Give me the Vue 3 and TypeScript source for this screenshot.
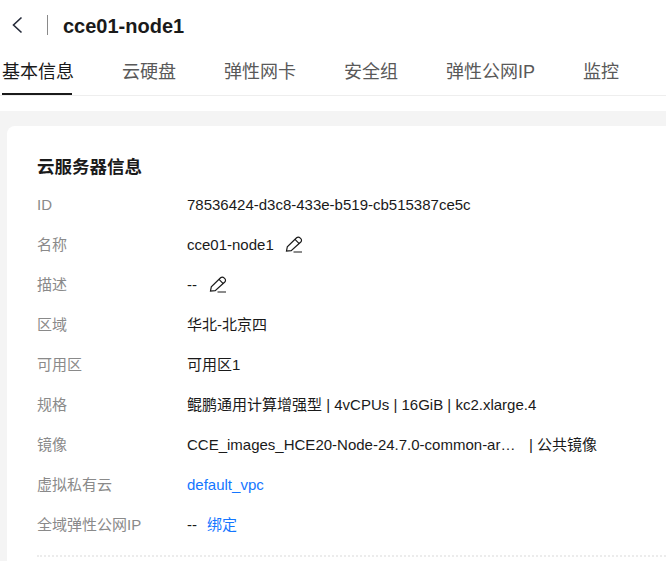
<script setup lang="ts">
interface Tab { label: string; active?: boolean }
const tabs: Tab[] = [
  { label: '基本信息', active: true },
  { label: '云硬盘' },
  { label: '弹性网卡' },
  { label: '安全组' },
  { label: '弹性公网IP' },
  { label: '监控' },
]
</script>

<template>
  <div class="page">
    <header class="head">
      <svg class="back" width="12" height="18" viewBox="0 0 12 18"><path d="M10.5 1.5 2.5 9l8 7.5" fill="none" stroke="#252b3a" stroke-width="1.6"/></svg>
      <span class="sep"></span>
      <h1 class="title">cce01-node1</h1>
    </header>
    <nav class="tabs">
      <span v-for="t in tabs" :key="t.label" class="tab" :class="{ on: t.active }">{{ t.label }}</span>
    </nav>
    <main class="body">
      <section class="card">
        <h2 class="card-title">云服务器信息</h2>
        <div class="row"><span class="k">ID</span><span class="v">78536424-d3c8-433e-b519-cb515387ce5c</span></div>
        <div class="row"><span class="k">名称</span><span class="v">cce01-node1<svg class="pen" width="18" height="18" viewBox="0 0 18 18"><path d="M1.5 15 2.3 10.8 11.6 1.8a2.4 2.4 0 0 1 3.4 0l.8.8a2.4 2.4 0 0 1 0 3.4L6.2 14.6ZM10 3.4 14.2 7.6M8.5 16H17" fill="none" stroke="#1a1a1a" stroke-width="1.2"/></svg></span></div>
        <div class="row"><span class="k">描述</span><span class="v">--<svg class="pen near" width="18" height="18" viewBox="0 0 18 18"><path d="M1.5 15 2.3 10.8 11.6 1.8a2.4 2.4 0 0 1 3.4 0l.8.8a2.4 2.4 0 0 1 0 3.4L6.2 14.6ZM10 3.4 14.2 7.6M8.5 16H17" fill="none" stroke="#1a1a1a" stroke-width="1.2"/></svg></span></div>
        <div class="row"><span class="k">区域</span><span class="v">华北-北京四</span></div>
        <div class="row"><span class="k">可用区</span><span class="v">可用区1</span></div>
        <div class="row"><span class="k">规格</span><span class="v">鲲鹏通用计算增强型 | 4vCPUs | 16GiB | kc2.xlarge.4</span></div>
        <div class="row"><span class="k">镜像</span><span class="v"><span class="clip">CCE_images_HCE20-Node-24.7.0-common-ar…</span><span class="pub">| 公共镜像</span></span></div>
        <div class="row"><span class="k">虚拟私有云</span><span class="v"><a class="link">default_vpc</a></span></div>
        <div class="row"><span class="k">全域弹性公网IP</span><span class="v">--<a class="link bind">绑定</a></span></div>
        <div class="dash"></div>
      </section>
    </main>
  </div>
</template>

<style scoped>
.page {
  width: 666px;
  height: 561px;
  overflow: hidden;
  background: #fff;
  font-family: "Liberation Sans", "Noto Sans CJK SC", sans-serif;
  font-size: 15px;
  color: #1a1a1a;
}
.head {
  height: 50px;
  display: flex;
  align-items: center;
  padding-left: 11px;
  box-sizing: border-box;
}
.back { flex: none; }
.sep {
  width: 1px;
  height: 20px;
  background: #8a8a8a;
  margin: 0 15px 0 24px;
}
.title {
  margin: 0;
  font-size: 20px;
  line-height: 24px;
  padding-top: 1px;
  font-weight: 700;
  color: #1a1a1a;
}
.tabs {
  height: 46px;
  padding-left: 2px;
  display: flex;
  gap: 48px;
  border-bottom: 1px solid #eeeeee;
  box-sizing: border-box;
  padding-top: 9px;
}
.tab {
  position: relative;
  font-size: 18px;
  line-height: 26px;
  height: 36px;
  box-sizing: border-box;
  color: #595959;
}
.tab.on {
  color: #1a1a1a;
}
.tab.on::after {
  content: "";
  position: absolute;
  left: 0;
  bottom: 0;
  width: 70px;
  height: 2px;
  background: #1a1a1a;
}
.body {
  margin-top: 15px;
  background: #f4f4f4;
  padding: 15px 0 0 7px;
  height: 450px;
  box-sizing: border-box;
}
.card {
  background: #fff;
  border-radius: 8px 0 0 0;
  padding: 28px 0 0 30px;
  height: 435px;
  box-sizing: border-box;
}
.card-title {
  margin: 0 0 5px;
  font-size: 17.5px;
  line-height: 26px;
  font-weight: 700;
}
.row {
  height: 40px;
  display: flex;
  align-items: center;
  font-size: 15px;
  line-height: 20px;
}
.k {
  width: 150px;
  flex: none;
  color: #8a8a8a;
}
.v {
  display: flex;
  align-items: center;
  color: #1a1a1a;
}
.pen { margin-left: 11px; }
.pen.near { margin-left: 12px; }
.clip {
  width: 329px;
  white-space: nowrap;
}
.pub { margin-left: 13px; }
.link { color: #1476ff; }
.bind { margin-left: 10px; }
.dash {
  margin-top: 10px;
  border-top: 2px dotted #ececec;
}
</style>
